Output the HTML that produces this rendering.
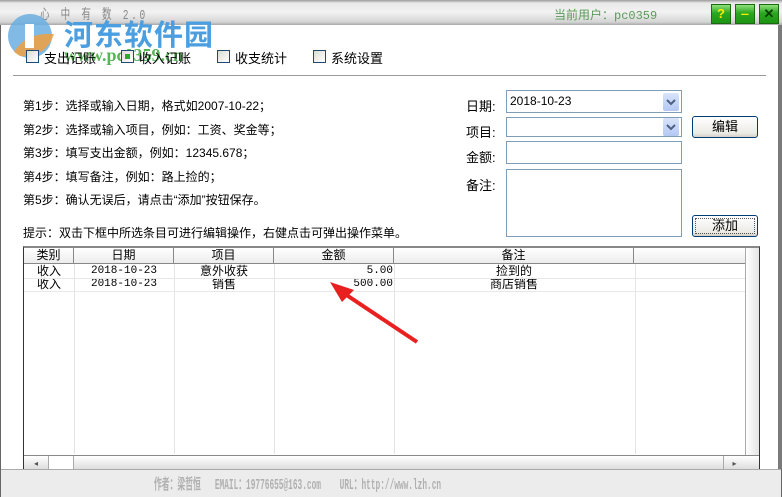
<!DOCTYPE html><html><head><meta charset="utf-8"><style>
*{margin:0;padding:0;box-sizing:border-box}
body{width:782px;height:497px;position:relative;overflow:hidden;background:#fff;font-family:"Liberation Sans","Noto Sans CJK SC",sans-serif;font-size:12px;color:#000}
.a{position:absolute}
.tb{left:0;top:0;width:782px;height:25px;background:linear-gradient(#9a9a9a 0,#e8e8e8 3px,#f2f2f2 12px,#d4d4d4 22px,#a8a8a8 25px)}
.btn{width:20px;height:20px;top:4px;background:linear-gradient(#8fe07a,#2aa820 45%,#1d9414);border:1px solid #1a6a10;color:#ffec00;font-weight:bold;text-align:center;line-height:18px;font-size:13px}
.cb{width:13px;height:13px;border:1px solid #1f4a78;background:linear-gradient(135deg,#dcdcd4,#fff)}
.inp{border:1px solid #7f9db9;background:#fff}
.dd{width:16px;height:18px;background:linear-gradient(#d8e4fb,#b4c8f4);border-radius:2px}
.pb{border:1px solid #003c74;border-radius:3px;background:linear-gradient(#fff,#ecebe6 80%,#d6d0c5);text-align:center;font-size:13px;line-height:20px}
.h{height:15px;top:248px;text-align:center;line-height:15px;border-right:1px solid #888;background:linear-gradient(#fff,#ececec)}
.vl{top:264px;width:1px;height:190px;background:#e4e4e4}
.c{text-align:center;line-height:13px}
</style></head><body>
<div class="a" style="left:0;top:0;width:782px;height:497px;border:1px solid #666;border-top:none"></div>
<div class="a tb"></div>
<div class="a" style="left:40px;top:4px;color:#888;font-family:'Liberation Mono','Noto Sans CJK SC',monospace;font-size:14px;letter-spacing:4px;white-space:nowrap;transform:scaleX(0.68);transform-origin:left">心 中 有 数 2.0</div>
<div class="a" style="left:554px;top:6px;color:#5a9a5a;font-family:'Liberation Mono','Noto Sans CJK SC',monospace;font-size:12px">当前用户：pc0359</div>
<div class="a btn" style="left:711px">?</div>
<div class="a btn" style="left:735px">‒</div>
<div class="a btn" style="left:759px;color:#0b3d06">✕</div>
<div class="a" style="left:778px;top:25px;width:4px;height:444px;background:#7a7a7a"></div>
<!-- watermark -->
<svg class="a" style="left:6px;top:10px" width="54" height="52"><circle cx="24" cy="26" r="22" fill="#6aaee0" opacity=".85"/><path d="M8 42 Q20 22 48 24 Q40 48 14 46Z" fill="#f0a040" opacity=".85"/><rect x="19" y="14" width="9" height="24" fill="#fff"/></svg>
<div class="a" style="left:64px;top:12px;font-size:29px;font-weight:bold;color:#4b9fe0;letter-spacing:1px">河东软件园</div>
<div class="a" style="left:64px;top:45px;font-size:18px;font-weight:bold;color:#3aa83a;font-family:'Liberation Serif',serif;opacity:.85">www.pc0359.cn</div>
<!-- checkboxes -->
<div class="a cb" style="left:26px;top:50px"></div><div class="a" style="left:44px;top:48px;font-size:13px">支出记账</div>
<div class="a cb" style="left:121px;top:50px"><div style="width:5px;height:5px;background:#2ea82e;margin:3px"></div></div><div class="a" style="left:139px;top:48px;font-size:13px">收入记账</div>
<div class="a cb" style="left:217px;top:50px"></div><div class="a" style="left:235px;top:48px;font-size:13px">收支统计</div>
<div class="a cb" style="left:313px;top:50px"></div><div class="a" style="left:331px;top:48px;font-size:13px">系统设置</div>
<div class="a" style="left:13px;top:75px;width:753px;height:1px;background:#999"></div>
<!-- steps -->
<div class="a" style="left:23px;top:95px;line-height:23.5px">第1步：选择或输入日期，格式如2007-10-22；<br>第2步：选择或输入项目，例如：工资、奖金等；<br>第3步：填写支出金额，例如：12345.678；<br>第4步：填写备注，例如：路上捡的；<br>第5步：确认无误后，请点击“添加”按钮保存。</div>
<div class="a" style="left:23px;top:224px">提示：双击下框中所选条目可进行编辑操作，右健点击可弹出操作菜单。</div>
<!-- form -->
<div class="a" style="left:466px;top:96px;font-size:13px">日期:</div>
<div class="a" style="left:466px;top:122px;font-size:13px">项目:</div>
<div class="a" style="left:466px;top:147px;font-size:13px">金额:</div>
<div class="a" style="left:466px;top:175px;font-size:13px">备注:</div>
<div class="a inp" style="left:506px;top:90px;width:176px;height:23px"><span style="position:absolute;left:3px;top:3px">2018-10-23</span><div class="a dd" style="right:2px;top:2px"><svg width="16" height="18"><path d="M4 7l4 4 4-4" stroke="#4d6185" stroke-width="2" fill="none"/></svg></div></div>
<div class="a inp" style="left:506px;top:117px;width:176px;height:20px"><div class="a dd" style="right:2px;top:0px;height:18px"><svg width="16" height="18"><path d="M4 7l4 4 4-4" stroke="#4d6185" stroke-width="2" fill="none"/></svg></div></div>
<div class="a inp" style="left:506px;top:141px;width:176px;height:23px"></div>
<div class="a inp" style="left:506px;top:169px;width:176px;height:68px"></div>
<div class="a pb" style="left:692px;top:116px;width:66px;height:22px">编辑</div>
<div class="a pb" style="left:692px;top:215px;width:66px;height:22px;outline:1px dotted #555;outline-offset:-4px">添加</div>
<!-- grid -->
<div class="a" style="left:23px;top:246px;width:737px;height:228px;border:1px solid #333;border-top:2px solid #888;background:#fff"></div>
<div class="a h" style="left:24px;width:50px">类别</div>
<div class="a h" style="left:74px;width:100px">日期</div>
<div class="a h" style="left:174px;width:100px">项目</div>
<div class="a h" style="left:274px;width:120px">金额</div>
<div class="a h" style="left:394px;width:240px">备注</div>
<div class="a h" style="left:634px;width:111px;border-right:none"></div>
<div class="a" style="left:24px;top:263px;width:721px;height:1px;background:#888"></div>
<div class="a vl" style="left:74px"></div><div class="a vl" style="left:174px"></div><div class="a vl" style="left:274px"></div><div class="a vl" style="left:394px"></div><div class="a vl" style="left:635px"></div>
<div class="a c" style="left:24px;top:265px;width:50px">收入<br>收入</div>
<div class="a c" style="left:74px;top:265px;width:100px;font-size:11px;font-family:'Liberation Mono',monospace">2018-10-23<br>2018-10-23</div>
<div class="a c" style="left:174px;top:265px;width:100px">意外收获<br>销售</div>
<div class="a c" style="left:274px;top:265px;width:120px;text-align:right;padding-right:1px;font-family:'Liberation Mono',monospace;font-size:11px">5.00<br>500.00</div>
<div class="a c" style="left:394px;top:265px;width:240px">捡到的<br>商店销售</div>
<div class="a" style="left:24px;top:278px;width:721px;height:1px;background:#e8e8e8"></div>
<div class="a" style="left:24px;top:291px;width:721px;height:1px;background:#e8e8e8"></div>
<!-- scrollbars -->
<div class="a" style="left:745px;top:248px;width:14px;height:207px;background:linear-gradient(90deg,#fff,#e4e4e4);border-left:1px solid #aaa"></div>
<div class="a" style="left:24px;top:455px;width:735px;height:16px;background:linear-gradient(#fff,#d8d8d8);border-top:1px solid #888"></div>
<div class="a" style="left:24px;top:456px;width:25px;height:15px;border-right:1px solid #aaa;text-align:center;font-size:8px;line-height:15px;color:#555">◂</div>
<div class="a" style="left:49px;top:456px;width:25px;height:15px;border-right:1px solid #aaa;background:#fff"></div>
<div class="a" style="left:723px;top:456px;width:22px;height:15px;border-left:1px solid #aaa;text-align:center;font-size:8px;line-height:15px;color:#555">▸</div>
<!-- arrow -->
<svg class="a" style="left:320px;top:270px" width="110" height="80"><path d="M97 72 L22 22" stroke="#e82020" stroke-width="4"/><path d="M10 12 L34 20 L22 32Z" fill="#e82020"/></svg>
<!-- footer -->
<div class="a" style="left:1px;top:469px;width:780px;height:28px;background:#ececec;border-top:1px solid #aaa"></div>
<div class="a" style="left:154px;top:473px;color:#b0b0b0;font-family:'Liberation Mono','Noto Sans CJK SC',monospace;font-size:15px;font-weight:bold;white-space:nowrap;transform:scaleX(0.52);transform-origin:left">作者：梁哲恒&nbsp;&nbsp;&nbsp;EMAIL：19776655@163.com&nbsp;&nbsp;&nbsp;&nbsp;URL：http://www.lzh.cn</div>
</body></html>
